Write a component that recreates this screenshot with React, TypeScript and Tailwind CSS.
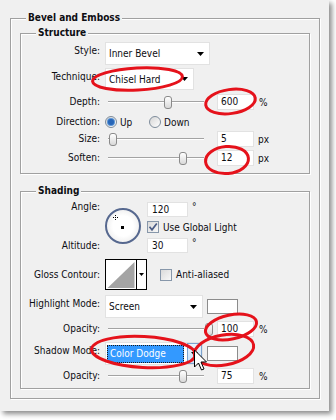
import React from "react";

const FONT = "font-['DejaVu_Sans_Condensed','Liberation_Sans',sans-serif]";

function Arrow() {
  return (
    <svg width="7" height="4" viewBox="0 0 7 4">
      <path d="M0 0H7L3.5 4Z" fill="#000" />
    </svg>
  );
}

function Label({ children, className = "" }: { children: React.ReactNode; className?: string }) {
  return <div className={`w-[79px] shrink-0 text-right leading-[12px] ${className}`}>{children}</div>;
}

function Slider({ pos }: { pos: number }) {
  return (
    <div className="relative ml-[6px] flex h-[16px] w-[100px] items-center px-[2px]">
      <div className="h-[2px] w-full border-t border-[#a3a3a3] bg-white" />
      <div
        className="absolute top-[2px] h-[13px] w-[8px] rounded-[3px] border border-[#8a8a8a] bg-gradient-to-b from-white to-[#d8d8d8]"
        style={{ left: pos }}
      />
    </div>
  );
}

function Num({ v }: { v: string }) {
  return (
    <div className="ml-[11px] flex h-[16px] w-[37px] items-center border border-[#e2e2e2] bg-white pl-[3px] leading-none">
      {v}
    </div>
  );
}

function Radio({ checked }: { checked?: boolean }) {
  return (
    <div className="flex h-[12px] w-[12px] items-center justify-center rounded-full border border-[#7e8c9b] bg-gradient-to-br from-[#d6d6d6] to-white">
      {checked && <div className="h-[6px] w-[6px] rounded-full bg-[#2766b8] shadow-[0_0_0_1px_#5b95d6]" />}
    </div>
  );
}

function Check({ checked }: { checked?: boolean }) {
  return (
    <div className="flex h-[12px] w-[12px] shrink-0 items-center justify-center border border-[#8797aa] bg-gradient-to-br from-[#dadada] to-[#f8f8f8]">
      {checked && (
        <svg width="10" height="10" viewBox="0 0 10 10">
          <path d="M1.5 4.8 L4 7.8 L8.8 1.6" fill="none" stroke="#4a5c86" strokeWidth="1.7" />
        </svg>
      )}
    </div>
  );
}

function Select({ text, className }: { text: string; className: string }) {
  return (
    <div className={`flex items-center justify-between border border-[#e2e2e2] bg-white pl-[3px] pr-[5px] ${className}`}>
      <span>{text}</span>
      <Arrow />
    </div>
  );
}

function Swatch() {
  return <div className="ml-[4px] h-[15px] w-[31px] border border-[#8c8c8c] bg-white" />;
}

function Legend({ children }: { children: React.ReactNode }) {
  return (
    <div className="absolute -top-[8px] left-[15px] bg-[#f0f0f0] px-[2px] text-[10px] font-bold leading-[14px]">
      {children}
    </div>
  );
}

const box =
  "relative border border-[#a0a0a0] shadow-[inset_1px_1px_0_#fff,1px_1px_0_#fff]";

export default function App() {
  return (
    <div className={`relative h-[420px] w-[336px] overflow-hidden bg-white text-[10px] text-[#0d0d12] ${FONT}`}>
      <div className="h-[411px] w-[329px] bg-[#f0f0f0] pl-[10px] pt-[18px] shadow-[3px_3px_5px_rgba(0,0,0,0.45)]">
        <div className={`${box} h-[381px] w-[310px] pl-[9px] pt-[14px]`}>
          <Legend>Bevel and Emboss</Legend>

          {/* Structure */}
          <div className={`${box} h-[141px] w-[290px] pt-[8px]`}>
            <Legend>Structure</Legend>
            <div className="flex h-[23px] items-center">
              <Label className="mb-[5px]">Style:</Label>
              <Select text="Inner Bevel" className="ml-[5px] h-[23px] w-[105px]" />
            </div>
            <div className="mt-[3px] flex h-[22px] items-center">
              <Label className="mb-[5px]">Technique:</Label>
              <Select text="Chisel Hard" className="ml-[5px] h-[22px] w-[89px]" />
            </div>
            <div className="mt-[4px] flex h-[16px] items-center">
              <Label>Depth:</Label>
              <Slider pos={58} />
              <Num v="600" />
              <span className="ml-[5px]">%</span>
            </div>
            <div className="mt-[4px] flex h-[16px] items-center">
              <Label>Direction:</Label>
              <div className="ml-[5px] flex w-[44px] items-center gap-[3px]">
                <Radio checked />
                <span>Up</span>
              </div>
              <div className="flex items-center gap-[3px]">
                <Radio />
                <span>Down</span>
              </div>
            </div>
            <div className="mt-[1px] flex h-[16px] items-center">
              <Label>Size:</Label>
              <Slider pos={3} />
              <Num v="5" />
              <span className="ml-[4px]">px</span>
            </div>
            <div className="mt-[3px] flex h-[16px] items-center">
              <Label>Soften:</Label>
              <Slider pos={73} />
              <Num v="12" />
              <span className="ml-[4px]">px</span>
            </div>
          </div>

          {/* Shading */}
          <div className={`${box} mt-[17px] h-[198px] w-[290px] pt-[9px]`}>
            <Legend>Shading</Legend>
            <div className="flex items-start">
              <div className="flex h-[51px] w-[79px] shrink-0 flex-col justify-between text-right leading-[12px]">
                <div>Angle:</div>
                <div>Altitude:</div>
              </div>
              <div className="relative ml-[5px] mt-[7px] h-[36px] w-[36px] rounded-full border-2 border-[#56688f] bg-[radial-gradient(circle,#ffffff_45%,#e2e2e2_100%)]">
                <svg className="absolute left-0 top-0" width="32" height="32" viewBox="0 0 32 32">
                  <path d="M8.5 5v5M6 7.5h5" stroke="#000" strokeWidth="1" strokeDasharray="1 1" />
                  <rect x="14" y="16" width="3" height="3" fill="#000" />
                </svg>
              </div>
              <div className="ml-[6px] flex flex-col">
                <div className="mt-[1px] flex items-start">
                  <div className="flex h-[15px] w-[41px] items-center border border-[#e2e2e2] bg-white pl-[4px] leading-none">120</div>
                  <span className="ml-[4px] -mt-[3px]">°</span>
                </div>
                <div className="mt-[4px] flex h-[12px] items-center gap-[4px]">
                  <Check checked />
                  <span>Use Global Light</span>
                </div>
                <div className="mt-[5px] flex items-start">
                  <div className="flex h-[15px] w-[41px] items-center border border-[#e2e2e2] bg-white pl-[4px] leading-none">30</div>
                  <span className="ml-[4px] -mt-[3px]">°</span>
                </div>
              </div>
            </div>

            <div className="mt-[6px] flex h-[31px] items-center">
              <Label>Gloss Contour:</Label>
              <div className="ml-[5px] flex h-[31px] w-[42px] border border-black bg-white">
                <svg width="30" height="29" viewBox="0 0 30 29">
                  <path d="M1.5 28 L28.5 2 L28.5 28 Z" fill="#a4a4a4" />
                </svg>
                <div className="flex w-[10px] items-center justify-center border-l border-black">
                  <svg width="5" height="3" viewBox="0 0 5 3">
                    <path d="M0 0H5L2.5 3Z" fill="#000" />
                  </svg>
                </div>
              </div>
              <div className="ml-[13px] flex items-center gap-[4px]">
                <Check />
                <span>Anti-aliased</span>
              </div>
            </div>

            <div className="mt-[5px] flex h-[23px] items-center">
              <Label className="mb-[5px]">Highlight Mode:</Label>
              <Select text="Screen" className="ml-[5px] h-[23px] w-[98px]" />
              <Swatch />
            </div>
            <div className="mt-[3px] flex h-[16px] items-center">
              <Label>Opacity:</Label>
              <Slider pos={99} />
              <Num v="100" />
              <span className="ml-[5px]">%</span>
            </div>
            <div className="mt-[5px] flex h-[23px] items-center">
              <Label className="mb-[5px]">Shadow Mode:</Label>
              <div className="ml-[5px] flex h-[23px] w-[98px] items-center border border-[#e2e2e2] bg-white pl-[1px]">
                <div className="flex h-[18px] w-[77px] items-center border border-dotted border-[#1a1a1a] bg-[#3399ff] pl-[2px] text-white">
                  Color Dodge
                </div>
                <div className="ml-[3px] flex h-[21px] w-[15px] items-center justify-center border border-[#7da2ce] bg-gradient-to-b from-[#eaf4fd] to-[#c6e0f8]">
                  <Arrow />
                </div>
              </div>
              <Swatch />
            </div>
            <div className="mt-[3px] flex h-[16px] items-center">
              <Label>Opacity:</Label>
              <Slider pos={73} />
              <Num v="75" />
              <span className="ml-[5px]">%</span>
            </div>
          </div>
        </div>
      </div>

      <svg className="pointer-events-none absolute left-0 top-0" width="336" height="420" viewBox="0 0 336 420">
        <g fill="none" stroke="#e5121b" strokeWidth="3">
          <ellipse cx="137.5" cy="79" rx="45" ry="11" transform="rotate(-3 137.5 79)" />
          <ellipse cx="230.5" cy="101.5" rx="25" ry="12" transform="rotate(-8 230.5 101.5)" />
          <ellipse cx="227" cy="160" rx="21.5" ry="13.5" transform="rotate(-5 227 160)" />
          <ellipse cx="231" cy="327" rx="26" ry="12" transform="rotate(-12 231 327)" />
          <ellipse cx="143.5" cy="352" rx="52" ry="15.5" transform="rotate(3 143.5 352)" />
          <ellipse cx="224" cy="350" rx="30" ry="15" transform="rotate(-10 224 350)" />
        </g>
        <path
          transform="translate(194.5 350)"
          d="M0 0 L0 17 L4 13 L7 20 L9.5 19 L6.5 12 L12 12 Z"
          fill="#fff"
          stroke="#000"
          strokeWidth="1"
          strokeLinejoin="round"
        />
      </svg>
    </div>
  );
}
